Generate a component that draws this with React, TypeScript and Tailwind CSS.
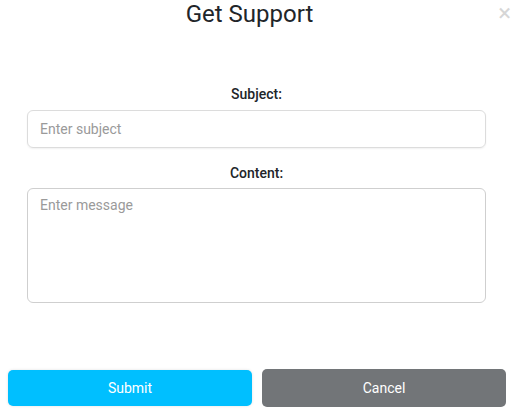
import React from "react";

export default function App() {
  return (
    <div className="relative h-[410px] w-[514px] bg-white font-['Roboto',sans-serif] text-[#212529]">
      <h1 className="pr-[15px] text-center text-[24px] leading-[28px] font-normal">Get Support</h1>
      <button className="absolute right-[3px] top-[1px] text-[24px] leading-[24px] text-[#d6d6d6]">×</button>

      <form className="flex flex-col pl-[27px] pr-[28px] pt-[56px]">
        <label className="mb-[6px] text-center text-[14px] leading-[20px] font-medium">Subject:</label>
        <input
          placeholder="Enter subject"
          className="h-[38px] rounded-[6px] border border-[#dcdcdc] px-[12px] text-[14px] shadow-[0_1px_2px_rgba(0,0,0,0.06)] outline-none placeholder:text-[#9a9a9a]"
        />
        <label className="mt-[15px] mb-[5px] text-center text-[14px] leading-[20px] font-medium">Content:</label>
        <textarea
          placeholder="Enter message"
          className="h-[115px] resize-none rounded-[6px] border border-[#cfcfcf] px-[12px] py-[7px] text-[14px] leading-[18px] outline-none placeholder:text-[#9a9a9a]"
        />
      </form>

      <div className="absolute bottom-[3px] left-[8px] right-[8px] flex gap-[10px]">
        <button className="h-[36px] flex-1 rounded-[5px] bg-[#00bfff] pt-[1px] text-[14px] text-white shadow-[0_0_3px_rgba(0,0,0,0.12)]">
          Submit
        </button>
        <button className="h-[38px] flex-1 -mt-[1px] rounded-[5px] bg-[#727578] pt-[1px] text-[14px] text-white">
          Cancel
        </button>
      </div>
    </div>
  );
}
